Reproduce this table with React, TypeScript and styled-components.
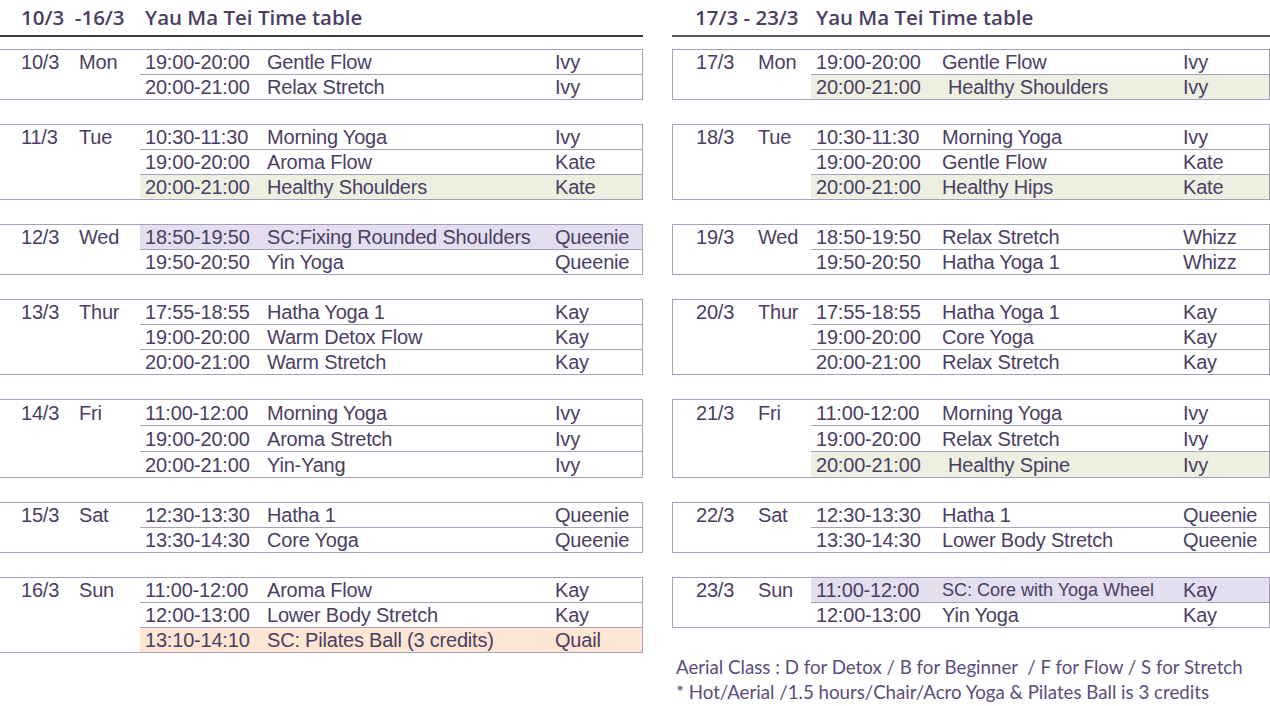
import React from 'react'
import styled, { createGlobalStyle, css } from 'styled-components'

type Tone = 'green' | 'purple' | 'peach'

interface Session {
	time: string
	name: string
	teacher: string
	tone?: Tone
	indent?: boolean
	small?: boolean
}

interface Day {
	date: string
	day: string
	rowHeight?: number
	sessions: Session[]
}

interface PanelLayout {
	boxed: boolean
	dayWidth: number
	datePad: number
	dateWidth: number
	columns: string
	rule: string
	range: string
}

const GlobalStyle = createGlobalStyle`
	html, body {
		margin: 0;
		padding: 0;
		background: #ffffff;
	}
	body {
		font-family: 'Liberation Sans', Arial, sans-serif;
		color: #4b3d64;
	}
`

const tones: Record<Tone, string> = {
	green: '#edf0e1',
	purple: '#e3dfee',
	peach: '#fde6d3',
}

const LINE = '#a99fbb'

const Page = styled.div`
	display: flex;
	align-items: flex-start;
	gap: 29px;
	width: 1270px;
	height: 706px;
	overflow: hidden;
`

const Panel = styled.section<{ $width: number }>`
	display: flex;
	flex-direction: column;
	width: ${({ $width }) => $width}px;
	flex-shrink: 0;
`

const Header = styled.header<{ $rule: string }>`
	display: flex;
	align-items: center;
	flex-shrink: 0;
	height: 37px;
	border-bottom: 2px solid ${({ $rule }) => $rule};
	margin-bottom: 12px;
	font-family: 'Open Sans', 'Noto Sans', sans-serif;
	font-weight: 600;
	font-size: 20.5px;
	color: #4d3d66;
	padding-bottom: 1px;
	box-sizing: border-box;
`

const Range = styled.div<{ $width: number; $pad: number }>`
	width: ${({ $width }) => $width}px;
	padding-left: ${({ $pad }) => $pad}px;
	box-sizing: border-box;
	white-space: pre;
	flex-shrink: 0;
`

const Title = styled.div`
	padding-left: 5px;
`

const Blocks = styled.div`
	display: flex;
	flex-direction: column;
	gap: 24px;
`

const Block = styled.div<{ $boxed: boolean }>`
	display: flex;
	border-top: 1px solid ${LINE};
	border-bottom: 1px solid ${LINE};
	border-right: 1px solid ${LINE};
	${({ $boxed }) =>
		$boxed &&
		css`
			border-left: 1px solid ${LINE};
		`}
`

const DayCell = styled.div<{ $width: number; $pad: number; $rowHeight: number }>`
	display: flex;
	width: ${({ $width }) => $width}px;
	padding-left: ${({ $pad }) => $pad}px;
	padding-top: 1px;
	box-sizing: border-box;
	height: ${({ $rowHeight }) => $rowHeight}px;
	align-items: center;
	font-size: 20px;
	letter-spacing: -0.2px;
	flex-shrink: 0;
`

const DateText = styled.span<{ $width: number }>`
	width: ${({ $width }) => $width}px;
`

const Sessions = styled.div`
	flex: 1;
	display: flex;
	flex-direction: column;
`

const Row = styled.div<{ $columns: string; $tone?: Tone; $height: number }>`
	display: grid;
	grid-template-columns: ${({ $columns }) => $columns};
	align-items: center;
	box-sizing: border-box;
	height: ${({ $height }) => $height}px;
	padding-left: 5px;
	padding-top: 1px;
	font-size: 20px;
	letter-spacing: -0.2px;
	white-space: nowrap;
	background: ${({ $tone }) => ($tone ? tones[$tone] : 'transparent')};
	& + & {
		border-top: 1px solid ${LINE};
	}
`

const ClassName = styled.span<{ $indent?: boolean; $small?: boolean }>`
	padding-left: ${({ $indent }) => ($indent ? 6 : 0)}px;
	font-size: ${({ $small }) => ($small ? 18 : 20)}px;
	letter-spacing: ${({ $small }) => ($small ? 0 : -0.2)}px;
`

const Notes = styled.div`
	margin-top: 27px;
	padding-left: 4px;
	font-family: 'Lato', 'Noto Sans', sans-serif;
	font-size: 18.7px;
	line-height: 25px;
	color: #5c4c7c;
	white-space: pre;
`

const leftWeek: Day[] = [
	{
		date: '10/3',
		day: 'Mon',
		sessions: [
			{ time: '19:00-20:00', name: 'Gentle Flow', teacher: 'Ivy' },
			{ time: '20:00-21:00', name: 'Relax Stretch', teacher: 'Ivy' },
		],
	},
	{
		date: '11/3',
		day: 'Tue',
		sessions: [
			{ time: '10:30-11:30', name: 'Morning Yoga', teacher: 'Ivy' },
			{ time: '19:00-20:00', name: 'Aroma Flow', teacher: 'Kate' },
			{ time: '20:00-21:00', name: 'Healthy Shoulders', teacher: 'Kate', tone: 'green' },
		],
	},
	{
		date: '12/3',
		day: 'Wed',
		sessions: [
			{ time: '18:50-19:50', name: 'SC:Fixing Rounded Shoulders', teacher: 'Queenie', tone: 'purple' },
			{ time: '19:50-20:50', name: 'Yin Yoga', teacher: 'Queenie' },
		],
	},
	{
		date: '13/3',
		day: 'Thur',
		sessions: [
			{ time: '17:55-18:55', name: 'Hatha Yoga 1', teacher: 'Kay' },
			{ time: '19:00-20:00', name: 'Warm Detox Flow', teacher: 'Kay' },
			{ time: '20:00-21:00', name: 'Warm Stretch', teacher: 'Kay' },
		],
	},
	{
		date: '14/3',
		day: 'Fri',
		rowHeight: 25,
		sessions: [
			{ time: '11:00-12:00', name: 'Morning Yoga', teacher: 'Ivy' },
			{ time: '19:00-20:00', name: 'Aroma Stretch', teacher: 'Ivy' },
			{ time: '20:00-21:00', name: 'Yin-Yang', teacher: 'Ivy' },
		],
	},
	{
		date: '15/3',
		day: 'Sat',
		sessions: [
			{ time: '12:30-13:30', name: 'Hatha 1', teacher: 'Queenie' },
			{ time: '13:30-14:30', name: 'Core Yoga', teacher: 'Queenie' },
		],
	},
	{
		date: '16/3',
		day: 'Sun',
		sessions: [
			{ time: '11:00-12:00', name: 'Aroma Flow', teacher: 'Kay' },
			{ time: '12:00-13:00', name: 'Lower Body Stretch', teacher: 'Kay' },
			{ time: '13:10-14:10', name: 'SC: Pilates Ball (3 credits)', teacher: 'Quail', tone: 'peach' },
		],
	},
]

const rightWeek: Day[] = [
	{
		date: '17/3',
		day: 'Mon',
		sessions: [
			{ time: '19:00-20:00', name: 'Gentle Flow', teacher: 'Ivy' },
			{ time: '20:00-21:00', name: 'Healthy Shoulders', teacher: 'Ivy', tone: 'green', indent: true },
		],
	},
	{
		date: '18/3',
		day: 'Tue',
		sessions: [
			{ time: '10:30-11:30', name: 'Morning Yoga', teacher: 'Ivy' },
			{ time: '19:00-20:00', name: 'Gentle Flow', teacher: 'Kate' },
			{ time: '20:00-21:00', name: 'Healthy Hips', teacher: 'Kate', tone: 'green' },
		],
	},
	{
		date: '19/3',
		day: 'Wed',
		sessions: [
			{ time: '18:50-19:50', name: 'Relax Stretch', teacher: 'Whizz' },
			{ time: '19:50-20:50', name: 'Hatha Yoga 1', teacher: 'Whizz' },
		],
	},
	{
		date: '20/3',
		day: 'Thur',
		sessions: [
			{ time: '17:55-18:55', name: 'Hatha Yoga 1', teacher: 'Kay' },
			{ time: '19:00-20:00', name: 'Core Yoga', teacher: 'Kay' },
			{ time: '20:00-21:00', name: 'Relax Stretch', teacher: 'Kay' },
		],
	},
	{
		date: '21/3',
		day: 'Fri',
		rowHeight: 25,
		sessions: [
			{ time: '11:00-12:00', name: 'Morning Yoga', teacher: 'Ivy' },
			{ time: '19:00-20:00', name: 'Relax Stretch', teacher: 'Ivy' },
			{ time: '20:00-21:00', name: 'Healthy Spine', teacher: 'Ivy', tone: 'green', indent: true },
		],
	},
	{
		date: '22/3',
		day: 'Sat',
		sessions: [
			{ time: '12:30-13:30', name: 'Hatha 1', teacher: 'Queenie' },
			{ time: '13:30-14:30', name: 'Lower Body Stretch', teacher: 'Queenie' },
		],
	},
	{
		date: '23/3',
		day: 'Sun',
		sessions: [
			{ time: '11:00-12:00', name: 'SC: Core with Yoga Wheel', teacher: 'Kay', tone: 'purple', small: true },
			{ time: '12:00-13:00', name: 'Yin Yoga', teacher: 'Kay' },
		],
	},
]

const leftLayout: PanelLayout = {
	boxed: false,
	dayWidth: 140,
	datePad: 21,
	dateWidth: 58,
	columns: '122px 288px 1fr',
	rule: '#3f3447',
	range: '10/3  -16/3',
}

const rightLayout: PanelLayout = {
	boxed: true,
	dayWidth: 138,
	datePad: 23,
	dateWidth: 62,
	columns: '126px 241px 1fr',
	rule: '#5e4e6f',
	range: '17/3 - 23/3',
}

const Timetable: React.FC<{ width: number; layout: PanelLayout; days: Day[]; children?: React.ReactNode }> = ({
	width,
	layout,
	days,
	children,
}) => {
	return (
		<Panel $width={width}>
			<Header $rule={layout.rule}>
				<Range $width={layout.dayWidth + (layout.boxed ? 1 : 0)} $pad={layout.datePad}>
					{layout.range}
				</Range>
				<Title>Yau Ma Tei Time table</Title>
			</Header>
			<Blocks>
				{days.map((d) => {
					const h = d.rowHeight ?? 24
					return (
						<Block key={d.date} $boxed={layout.boxed}>
							<DayCell $width={layout.dayWidth} $pad={layout.datePad} $rowHeight={h}>
								<DateText $width={layout.dateWidth}>{d.date}</DateText>
								<span>{d.day}</span>
							</DayCell>
							<Sessions>
								{d.sessions.map((s, i) => (
									<Row key={i} $columns={layout.columns} $tone={s.tone} $height={i === 0 ? h : h + 1}>
										<span>{s.time}</span>
										<ClassName $indent={s.indent} $small={s.small}>
											{s.name}
										</ClassName>
										<span>{s.teacher}</span>
									</Row>
								))}
							</Sessions>
						</Block>
					)
				})}
			</Blocks>
			{children}
		</Panel>
	)
}

export default function App() {
	return (
		<>
			<GlobalStyle />
			<Page>
				<Timetable width={643} layout={leftLayout} days={leftWeek} />
				<Timetable width={598} layout={rightLayout} days={rightWeek}>
					<Notes>
						{'Aerial Class : D for Detox / B for Beginner  / F for Flow / S for Stretch\n* Hot/Aerial /1.5 hours/Chair/Acro Yoga & Pilates Ball is 3 credits'}
					</Notes>
				</Timetable>
			</Page>
		</>
	)
}
